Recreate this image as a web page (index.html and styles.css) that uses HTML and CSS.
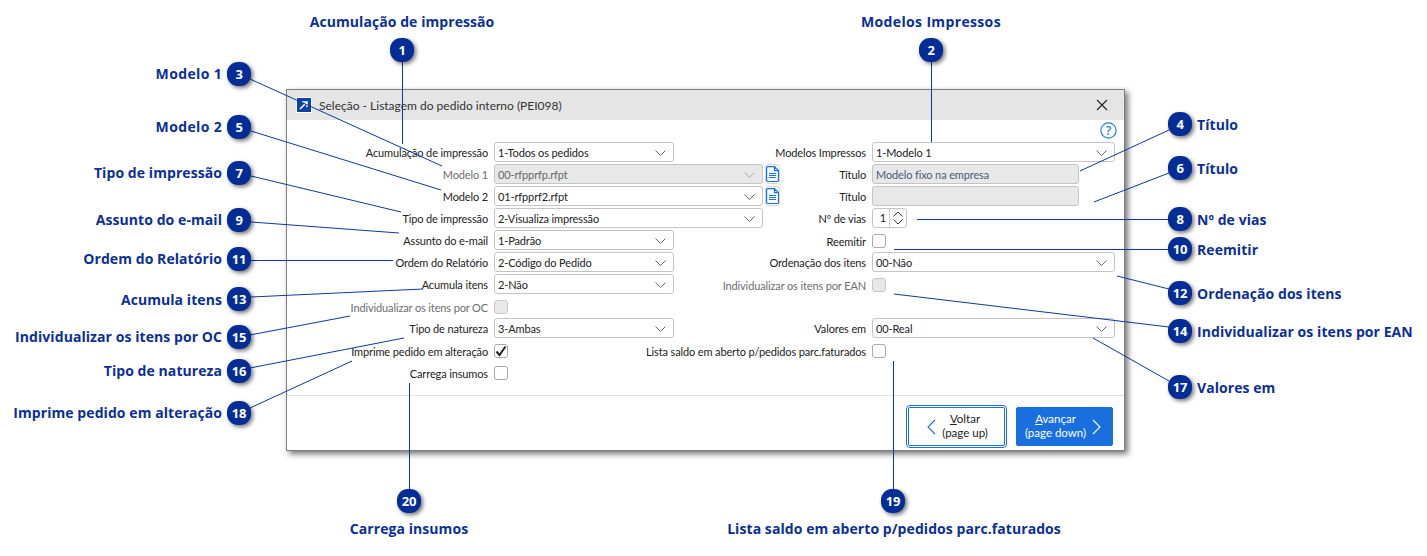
FILE: index.html
```html
<!DOCTYPE html>
<html lang="pt">
<head>
<meta charset="utf-8">
<title>Seleção - Listagem do pedido interno (PEI098)</title>
<link rel="stylesheet" href="styles.css">
</head>
<body>
<svg width="0" height="0" class="defs">
  <symbol id="chev" viewBox="0 0 11 6"><path d="M.5.5l5 5 5-5" fill="none" stroke="currentColor"/></symbol>
  <symbol id="doc" viewBox="0 0 13 16"><path d="M1.500.6h7l4 4v9.400a1.500 1.500 0 0 1-1.500 1.500H2A1.500 1.500 0 0 1 .6 14V2A1.500 1.500 0 0 1 1.500.6zM8.500.6v4h4M3 7.500h7M3 9.500h7M3 11.500h7" fill="none" stroke="#1273e6" stroke-width="1.200"/></symbol>
</svg>
<main class="canvas">
  <section class="dialog">
    <header class="titlebar">
      <svg class="app-icon" width="16" height="16" viewBox="0 0 16 16"><rect x=".5" y=".5" width="15" height="15" fill="#0b43a8" stroke="#fff"/><path d="M4 12l6-6M6 5h5v5" fill="none" stroke="#fff" stroke-width="1.600"/></svg>
      <span class="title">Seleção - Listagem do pedido interno (PEI098)</span>
      <svg class="close" width="12" height="12" viewBox="0 0 12 12"><path d="M1 1l10 10M11 1L1 11" stroke="#222" stroke-width="1.100"/></svg>
    </header>
    <div class="helpbar">
      <svg width="17" height="17" viewBox="0 0 17 17"><circle cx="8.500" cy="8.500" r="7.600" fill="none" stroke="#2a86e0" stroke-width="1.300"/><text x="8.500" y="12.600" text-anchor="middle" class="help-q">?</text></svg>
    </div>
    <div class="form">
      <label class="lbl">Acumulação de impressão</label>
      <div class="field"><div class="select w180"><span>1-Todos os pedidos</span><svg class="chev"><use href="#chev"/></svg></div></div>
      <label class="lbl">Modelos Impressos</label>
      <div class="field"><div class="select wfull"><span>1-Modelo 1</span><svg class="chev"><use href="#chev"/></svg></div></div>

      <label class="lbl off">Modelo 1</label>
      <div class="field"><div class="select w269 dis"><span>00-rfpprfp.rfpt</span><svg class="chev"><use href="#chev"/></svg></div><span class="docbtn"><svg width="13" height="16"><use href="#doc"/></svg></span></div>
      <label class="lbl">Título</label>
      <div class="field"><div class="select w207 dis blue"><span>Modelo fixo na empresa</span></div></div>

      <label class="lbl">Modelo 2</label>
      <div class="field"><div class="select w269"><span>01-rfpprf2.rfpt</span><svg class="chev"><use href="#chev"/></svg></div><span class="docbtn"><svg width="13" height="16"><use href="#doc"/></svg></span></div>
      <label class="lbl">Título</label>
      <div class="field"><div class="select w207 dis"></div></div>

      <label class="lbl">Tipo de impressão</label>
      <div class="field"><div class="select w269"><span>2-Visualiza impressão</span><svg class="chev"><use href="#chev"/></svg></div></div>
      <label class="lbl">Nº de vias</label>
      <div class="field"><div class="spin"><span class="spin-val">1</span><span class="spin-btn"><svg width="10" height="14" viewBox="0 0 10 14"><path d="M.5 5.500l4.500-4.500 4.500 4.500M.5 8.500l4.500 4.500 4.500-4.500" fill="none" stroke="#333"/></svg></span></div></div>

      <label class="lbl">Assunto do e-mail</label>
      <div class="field"><div class="select w180"><span>1-Padrão</span><svg class="chev"><use href="#chev"/></svg></div></div>
      <label class="lbl chk">Reemitir</label>
      <div class="field"><span class="check"></span></div>

      <label class="lbl">Ordem do Relatório</label>
      <div class="field"><div class="select w180"><span>2-Código do Pedido</span><svg class="chev"><use href="#chev"/></svg></div></div>
      <label class="lbl">Ordenação dos itens</label>
      <div class="field"><div class="select wfull"><span>00-Não</span><svg class="chev"><use href="#chev"/></svg></div></div>

      <label class="lbl">Acumula itens</label>
      <div class="field"><div class="select w180"><span>2-Não</span><svg class="chev"><use href="#chev"/></svg></div></div>
      <label class="lbl off chk">Individualizar os itens por EAN</label>
      <div class="field"><span class="check dis"></span></div>

      <label class="lbl off chk">Individualizar os itens por OC</label>
      <div class="field"><span class="check dis"></span></div>
      <span></span><span></span>

      <label class="lbl">Tipo de natureza</label>
      <div class="field"><div class="select w180"><span>3-Ambas</span><svg class="chev"><use href="#chev"/></svg></div></div>
      <label class="lbl">Valores em</label>
      <div class="field"><div class="select wfull"><span>00-Real</span><svg class="chev"><use href="#chev"/></svg></div></div>

      <label class="lbl chk">Imprime pedido em alteração</label>
      <div class="field"><span class="check"><svg width="12" height="12" viewBox="0 0 12 12"><path d="M1.500 6.500l3 3.500 6-8.500" fill="none" stroke="#222" stroke-width="2"/></svg></span></div>
      <label class="lbl chk">Lista saldo em aberto p/pedidos parc.faturados</label>
      <div class="field"><span class="check"></span></div>

      <label class="lbl chk">Carrega insumos</label>
      <div class="field"><span class="check"></span></div>
      <span></span><span></span>
    </div>
    <footer class="footer">
      <button class="btn back"><svg width="9" height="16" viewBox="0 0 9 16"><path d="M8 1L1 8l7 7" fill="none" stroke="#1a6fdf" stroke-width="1.100"/></svg><span class="btn-text"><u>V</u>oltar<br>(page up)</span></button>
      <button class="btn next"><span class="btn-text"><u>A</u>vançar<br>(page down)</span><svg width="9" height="16" viewBox="0 0 9 16"><path d="M1 1l7 7-7 7" fill="none" stroke="#fff" stroke-width="1.100"/></svg></button>
    </footer>
  </section>

  <svg class="leaders" width="1427" height="556" viewBox="0 0 1427 556">
    <path d="M402.500 60V144M931.500 60V142M250 79L442 166M251 131L441 190M251 176L401 212M251 222L399 233M251 260.500H393M251 297L423 289M250 335L350 316M250 368L404 338M250 408L352 361M409.500 490V383M893.500 490V361M1169 130L1080 171M1169 173L1094 202M1169 219.500H917M1169 249.500H894M1169 289L1117 276M1169 327L894 294M1169 381L1093 338"/>
  </svg>

  <b class="pin p1">1</b><b class="pin p2">2</b><b class="pin p3">3</b><b class="pin p4">4</b><b class="pin p5">5</b>
  <b class="pin p6">6</b><b class="pin p7">7</b><b class="pin p8">8</b><b class="pin p9">9</b><b class="pin p10">10</b>
  <b class="pin p11">11</b><b class="pin p12">12</b><b class="pin p13">13</b><b class="pin p14">14</b><b class="pin p15">15</b>
  <b class="pin p16">16</b><b class="pin p17">17</b><b class="pin p18">18</b><b class="pin p19">19</b><b class="pin p20">20</b>

  <span class="cap mid c1">Acumulação de impressão</span>
  <span class="cap mid wide c2">Modelos Impressos</span>
  <span class="cap lft wide c3">Modelo 1</span>
  <span class="cap rgt c4">Título</span>
  <span class="cap lft wide c5">Modelo 2</span>
  <span class="cap rgt c6">Título</span>
  <span class="cap lft c7">Tipo de impressão</span>
  <span class="cap rgt c8">Nº de vias</span>
  <span class="cap lft c9">Assunto do e-mail</span>
  <span class="cap rgt c10">Reemitir</span>
  <span class="cap lft c11">Ordem do Relatório</span>
  <span class="cap rgt c12">Ordenação dos itens</span>
  <span class="cap lft c13">Acumula itens</span>
  <span class="cap rgt c14">Individualizar os itens por EAN</span>
  <span class="cap lft c15">Individualizar os itens por OC</span>
  <span class="cap lft c16">Tipo de natureza</span>
  <span class="cap rgt c17">Valores em</span>
  <span class="cap lft c18">Imprime pedido em alteração</span>
  <span class="cap mid c19">Lista saldo em aberto p/pedidos parc.faturados</span>
  <span class="cap mid c20">Carrega insumos</span>
</main>
</body>
</html>
```

FILE: styles.css
```css
* { box-sizing: border-box; }
html, body { margin: 0; padding: 0; background: #fff; }
.defs { position: absolute; }
.canvas {
  position: relative;
  width: 1427px;
  height: 556px;
  overflow: hidden;
  font-family: "Open Sans", "Noto Sans", sans-serif;
}

/* dialog window */
.dialog {
  position: absolute;
  left: 286px;
  top: 89px;
  width: 839px;
  height: 362px;
  background: #fff;
  border: 1px solid #7f7f7f;
  box-shadow: 3px 3px 6px rgba(0, 0, 0, .55);
  color: #333;
  font-family: Lato, "Open Sans", sans-serif;
  font-size: 12px;
  display: flex;
  flex-direction: column;
}
.titlebar {
  height: 30px;
  background: #e5e5e5;
  display: flex;
  align-items: center;
  padding: 0 16px 0 9px;
  flex: none;
}
.app-icon { flex: none; margin-right: 7px; }
.title { flex: 1; color: #333; }
.close { flex: none; }
.helpbar {
  height: 22px;
  flex: none;
  display: flex;
  justify-content: flex-end;
  align-items: flex-start;
  padding: 2px 7px 0 0;
}
.help-q { font: 600 12px "Open Sans", sans-serif; fill: #2a86e0; }
.form {
  display: grid;
  grid-template-columns: 201px 292px 86px 1fr;
  grid-auto-rows: 20px;
  column-gap: 0;
  row-gap: 2px;
  padding-bottom: 13px;
  flex: none;
  border-bottom: 1px solid #e3e3e3;
  height: 254px;
  font-size: 11px;
  letter-spacing: -.13px;
  color: #222;
}
.lbl {
  justify-self: end;
  align-self: center;
  white-space: nowrap;
  line-height: 20px;
  padding-top: 1px;
}
.lbl.chk { padding-top: 3px; }
.lbl.off { color: #6d6d6d; }
.field {
  display: flex;
  align-items: center;
  gap: 2px;
  padding-left: 6px;
}
.select {
  height: 20px;
  border: 1px solid #c4c4c4;
  border-radius: 3px;
  background: #fff;
  display: flex;
  align-items: center;
  justify-content: space-between;
  padding: 1px 7px 0 3px;
  line-height: 18px;
  color: #222;
  flex: none;
}
.w180 { width: 180px; }
.w269 { width: 269px; }
.w207 { width: 207px; }
.wfull { width: 243px; }
.select.dis { background: #e8e8e8; color: #666; }
.select.blue { color: #4a5a78; }
.chev { width: 11px; height: 6px; color: #666; flex: none; }
.dis .chev { color: #aaa; }
.docbtn {
  width: 15px;
  height: 20px;
  border: 1px solid #d6d6d6;
  border-radius: 3px;
  display: flex;
  align-items: center;
  justify-content: center;
  background: #fff;
  flex: none;
}
.spin {
  width: 35px;
  height: 20px;
  border: 1px solid #c4c4c4;
  border-radius: 3px;
  display: flex;
  align-items: stretch;
}
.spin-val { width: 17px; text-align: right; padding-right: 3px; line-height: 18px; border-right: 1px solid #d0d0d0; }
.spin-btn { flex: 1; display: flex; align-items: center; justify-content: center; }
.check {
  width: 14px;
  height: 14px;
  margin-top: 2px;
  border: 1px solid #aaa;
  border-radius: 3px;
  background: #fff;
  display: flex;
  align-items: center;
  justify-content: center;
}
.check.dis { background: #e8e8e8; border-color: #c8c8c8; }

.footer {
  flex: 1;
  display: flex;
  justify-content: flex-end;
  align-items: flex-end;
  gap: 11px;
  padding: 0 11px 4px 0;
}
.btn {
  width: 97px;
  height: 39px;
  border-radius: 2px;
  font: 11.500px/14px Lato, "Open Sans", sans-serif;
  display: flex;
  align-items: center;
  padding: 0;
}
.btn-text { flex: 1; text-align: center; padding-bottom: 2px; }
.back {
  background: #fff;
  color: #222;
  border: 1px solid #1a6fdf;
  outline: 1px solid #1a6fdf;
  outline-offset: 1px;
  padding-left: 18px;
  padding-right: 10px;
}
.next {
  background: #1a6fdf;
  color: #fff;
  border: 1px solid #1a6fdf;
  padding-left: 2px;
  padding-right: 11px;
}

/* callouts */
.leaders { position: absolute; left: 0; top: 0; pointer-events: none; }
.leaders path { fill: none; stroke: #0a3a9e; stroke-width: 1; }
.pin {
  position: absolute;
  width: 24px;
  height: 24px;
  border-radius: 11px;
  background: #032d96;
  color: #fff;
  font: 700 13px/24px "Open Sans", sans-serif;
  letter-spacing: -.3px;
  text-align: center;
  box-shadow: 2px 2px 4px rgba(0, 0, 0, .55);
}
.p1 { left: 390px; top: 38px; }
.p2 { left: 919px; top: 38px; }
.p3 { left: 227px; top: 62px; }
.p4 { left: 1168px; top: 112px; }
.p5 { left: 227px; top: 115px; }
.p6 { left: 1168px; top: 156px; }
.p7 { left: 227px; top: 161px; }
.p8 { left: 1168px; top: 207px; }
.p9 { left: 227px; top: 208px; }
.p10 { left: 1168px; top: 237px; }
.p11 { left: 227px; top: 247px; }
.p12 { left: 1168px; top: 281px; }
.p13 { left: 227px; top: 287px; }
.p14 { left: 1168px; top: 319px; }
.p15 { left: 227px; top: 325px; }
.p16 { left: 227px; top: 359px; }
.p17 { left: 1168px; top: 375px; }
.p18 { left: 227px; top: 401px; }
.p19 { left: 881px; top: 489px; }
.p20 { left: 397px; top: 489px; }

.cap {
  position: absolute;
  white-space: nowrap;
  color: #0a2f96;
  font: 700 14px/20px "Open Sans", sans-serif;
  letter-spacing: .07px;
}
.cap.wide { letter-spacing: .35px; }
.cap.lft { right: 1205px; }
.cap.rgt { left: 1197px; }
.cap.mid { transform: translateX(-50%); }
.c1 { left: 402px; top: 12px; }
.c2 { left: 931px; top: 12px; }
.c3 { top: 64px; }
.c4 { top: 115px; }
.c5 { top: 117px; }
.c6 { top: 159px; }
.c7 { top: 163px; }
.c8 { top: 210px; }
.c9 { top: 210px; }
.c10 { top: 240px; }
.c11 { top: 249px; }
.c12 { top: 284px; }
.c13 { top: 290px; }
.c14 { top: 322px; }
.c15 { top: 327px; }
.c16 { top: 361px; }
.c17 { top: 378px; }
.c18 { top: 403px; }
.c19 { left: 894px; top: 519px; }
.c20 { left: 409px; top: 519px; }
```
